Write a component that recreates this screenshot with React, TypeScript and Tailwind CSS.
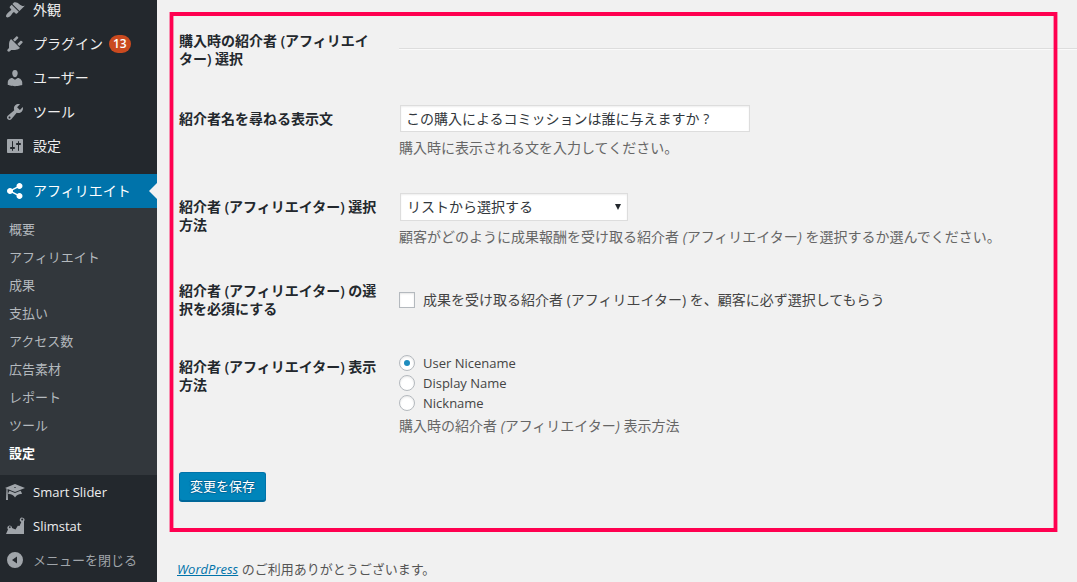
import type { ReactNode } from 'react';

const ICONS: Record<string, string> = {
  appearance:
    'M14.48 11.06L7.41 3.99l1.5-1.5c.5-.56 2.3-.47 3.51.32 1.21.8 1.43 1.28 2.91 2.1 1.18.64 2.45 1.26 4.45.85zm-.71.71L6.7 4.7 4.93 6.47c-.39.39-.39 1.02 0 1.41l1.06 1.06c.39.39.39 1.03 0 1.42-.6.6-1.43 1.11-2.21 1.69-.35.26-.7.53-1.01.84C1.43 14.23.4 16.08 1.4 17.07c.99 1 2.84-.03 4.18-1.36.31-.31.58-.66.85-1.02.57-.78 1.08-1.61 1.69-2.21.39-.39 1.02-.39 1.41 0l1.06 1.06c.39.39 1.02.39 1.41 0z',
  plugins:
    'M13.11 4.36L9.87 7.6 8 5.73l3.24-3.24c.35-.34 1.05-.2 1.56.32.52.51.66 1.21.31 1.55zm-8 1.77l.91-1.12 9.01 9.01-1.19.84c-.71.71-2.63 1.16-3.82 1.16H6.14L4.9 17.26c-.59.59-1.54.59-2.12 0-.59-.58-.59-1.53 0-2.12l1.24-1.24v-3.88c0-1.13.4-3.19 1.09-3.89zm7.26 3.97l3.24-3.24c.34-.35 1.04-.21 1.55.31.52.51.66 1.21.31 1.55l-3.24 3.25z',
  users:
    'M10 9.25c-2.27 0-2.73-3.44-2.73-3.44C7 4.02 7.82 2 9.97 2c2.16 0 2.98 2.02 2.71 3.81 0 0-.41 3.44-2.68 3.44zm0 2.57L12.72 10c2.39 0 4.52 2.33 4.52 4.53v2.49s-3.65 1.13-7.24 1.13c-3.65 0-7.24-1.13-7.24-1.13v-2.49c0-2.25 1.94-4.48 4.47-4.48z',
  tools:
    'M16.68 9.77c-1.34 1.34-3.3 1.67-4.95.99l-5.41 6.52c-.99.99-2.59.99-3.58 0s-.99-2.59 0-3.57l6.52-5.42c-.68-1.65-.35-3.61.99-4.95 1.28-1.28 3.12-1.62 4.72-1.06l-2.89 2.89 2.82 2.82 2.86-2.87c.53 1.58.18 3.39-1.08 4.65zM3.81 16.21c.4.39 1.04.39 1.43 0 .4-.4.4-1.04 0-1.43-.39-.4-1.03-.4-1.43 0-.39.39-.39 1.03 0 1.43z',
  settings:
    'M18 16V4c0-.55-.45-1-1-1H3c-.55 0-1 .45-1 1v12c0 .55.45 1 1 1h14c.55 0 1-.45 1-1zM8 11h1c.55 0 1 .45 1 1s-.45 1-1 1H8v1.5c0 .28-.22.5-.5.5s-.5-.22-.5-.5V13H6c-.55 0-1-.45-1-1s.45-1 1-1h1V5.5c0-.28.22-.5.5-.5s.5.22.5.5V11zm5-2h-1c-.55 0-1-.45-1-1s.45-1 1-1h1V5.5c0-.28.22-.5.5-.5s.5.22.5.5V7h1c.55 0 1 .45 1 1s-.45 1-1 1h-1v5.5c0 .28-.22.5-.5.5s-.5-.22-.5-.5V9z',
  share:
    'M14.5 12c1.66 0 3 1.34 3 3s-1.34 3-3 3-3-1.34-3-3c0-.24.03-.46.09-.69l-4.38-2.3c-.55.61-1.33.99-2.21.99-1.66 0-3-1.34-3-3s1.34-3 3-3c.88 0 1.66.39 2.21.99l4.38-2.3c-.06-.23-.09-.45-.09-.69 0-1.66 1.34-3 3-3s3 1.34 3 3-1.34 3-3 3c-.88 0-1.66-.39-2.21-.99l-4.38 2.3c.06.23.09.45.09.69s-.03.46-.09.69l4.38 2.3c.55-.61 1.33-.99 2.21-.99z',
  slider:
    'M10 10L2.54 7.02 3 18H1l.48-11.41L0 6l10-4 10 4zm0-5c-.55 0-1 .22-1 .5s.45.5 1 .5 1-.22 1-.5-.45-.5-1-.5zm0 6l5.57-2.23c.71.94 1.2 2.07 1.36 3.3-.3-.04-.61-.07-.93-.07-2.55 0-4.78 1.37-6 3.41C8.78 13.37 6.55 12 4 12c-.32 0-.63.03-.93.07.16-1.23.65-2.36 1.36-3.3z',
  stats:
    'M1 18l2-4.600A2.300 2.300 0 1 1 7 11.900l3.500 1.600L12.800 9.700 14.500 10 16.300 6A2.300 2.300 0 1 1 19 5.200V18zM4.800 10.200a.9.9 0 1 0 .01 0zM17.200 2.600a.9.9 0 1 0 .01 0z',
  collapse: 'M10 2a8 8 0 1 1 0 16 8 8 0 0 1 0-16zm2 4.500L7 10l5 3.500z',
};

function Icon({ name }: { name: string }) {
  return (
    <svg viewBox="0 0 20 20" className="size-5 shrink-0" fill="currentColor" fillRule="evenodd" aria-hidden="true">
      <path d={ICONS[name]} />
    </svg>
  );
}

function MenuItem({ icon, children }: { icon: string; children: ReactNode }) {
  return (
    <li>
      <a href="#" className="flex h-[34px] items-center gap-2 pl-[5px] text-[#eee]">
        <span className="text-[#a0a5aa]">
          <Icon name={icon} />
        </span>
        {children}
      </a>
    </li>
  );
}

const SUBMENU = ['概要', 'アフィリエイト', '成果', '支払い', 'アクセス数', '広告素材', 'レポート', 'ツール', '設定'];

function Sidebar() {
  return (
    <nav className="w-[157px] shrink-0 overflow-hidden bg-[#23282d] text-sm whitespace-nowrap">
      <ul className="-mt-[7px]">
        <MenuItem icon="appearance">外観</MenuItem>
        <MenuItem icon="plugins">
          プラグイン
          <span className="-ml-0.5 flex h-[18px] items-center rounded-full bg-[#ca4a1f] px-1 text-xs font-semibold text-white">
            13
          </span>
        </MenuItem>
        <MenuItem icon="users">ユーザー</MenuItem>
        <MenuItem icon="tools">ツール</MenuItem>
        <MenuItem icon="settings">設定</MenuItem>
        <li className="mt-[11px]">
          <a href="#" className="relative flex h-[34px] items-center gap-2 bg-[#0073aa] pl-[5px] text-white">
            <Icon name="share" />
            アフィリエイト
            <span className="absolute top-[9px] right-0 border-y-8 border-r-8 border-y-transparent border-r-[#f1f1f1]" />
          </a>
          <ul className="bg-[#32373c] pt-[7px] pb-2 text-[13px]">
            {SUBMENU.map((label, i) => (
              <li key={label}>
                <a
                  href="#"
                  className={
                    i === SUBMENU.length - 1
                      ? 'flex h-7 items-center pl-[9px] font-semibold text-white'
                      : 'flex h-7 items-center pl-[9px] text-[#b4b9be]'
                  }
                >
                  {label}
                </a>
              </li>
            ))}
          </ul>
        </li>
        <MenuItem icon="slider">
          <span className="text-[13px]">Smart Slider</span>
        </MenuItem>
        <MenuItem icon="stats">
          <span className="text-[13px]">Slimstat</span>
        </MenuItem>
        <li>
          <button type="button" className="flex h-[34px] w-full items-center gap-2 pl-[5px] text-[13px] text-[#a0a5aa]">
            <Icon name="collapse" />
            メニューを閉じる
          </button>
        </li>
      </ul>
    </nav>
  );
}

function Row({ heading, children }: { heading: ReactNode; children: ReactNode }) {
  return (
    <div className="grid grid-cols-[200px_1fr] gap-x-5">
      <div className="py-5 leading-[18px] font-semibold text-[#23282d]">{heading}</div>
      <div className="min-w-0 pt-[15px]">{children}</div>
    </div>
  );
}

function Description({ children }: { children: ReactNode }) {
  return <p className="mt-1.5 leading-5 text-[#666]">{children}</p>;
}

function SettingsForm() {
  return (
    <form className="pt-3 pl-[22px] text-sm text-[#444]" onSubmit={(e) => e.preventDefault()}>
      <div className="pb-0.5">
        <Row heading="購入時の紹介者 (アフィリエイター) 選択">
          <hr className="mt-[21px] border-t border-b border-t-[#ddd] border-b-[#fafafa]" />
        </Row>
      </div>
      <div className="pb-5">
        <Row heading={<label htmlFor="question">紹介者名を尋ねる表示文</label>}>
          <input
            id="question"
            type="text"
            defaultValue="この購入によるコミッションは誰に与えますか ?"
            className="ml-px block h-[27px] w-[350px] max-w-full border border-[#ddd] bg-white px-[5px] pb-0.5 text-[#32373c] shadow-[inset_0_1px_2px_rgba(0,0,0,0.07)]"
          />
          <Description>購入時に表示される文を入力してください。</Description>
        </Row>
      </div>
      <div className="pb-2">
        <Row heading={<label htmlFor="method">紹介者 (アフィリエイター) 選択方法</label>}>
          <div className="relative ml-px w-[228px]">
            <select
              id="method"
              className="block h-7 w-full appearance-none border border-[#ddd] bg-white pr-5 pl-1.5 text-[#32373c] shadow-[inset_0_1px_2px_rgba(0,0,0,0.07)]"
            >
              <option>リストから選択する</option>
            </select>
            <svg
              viewBox="0 0 6 6"
              className="pointer-events-none absolute top-[11px] right-[7px] size-1.5"
              fill="#23282d"
              aria-hidden="true"
            >
              <path d="M0 0h6L3 6z" />
            </svg>
          </div>
          <Description>
            顧客がどのように成果報酬を受け取る紹介者 <em>(</em>アフィリエイター<em>)</em> を選択するか選んでください。
          </Description>
        </Row>
      </div>
      <Row heading={<label htmlFor="required">紹介者 (アフィリエイター) の選択を必須にする</label>}>
        <label className="mt-[13px] flex items-center gap-2 leading-5">
          <input
            id="required"
            type="checkbox"
            className="size-4 shrink-0 appearance-none border border-[#b4b9be] bg-white shadow-[inset_0_1px_2px_rgba(0,0,0,0.1)]"
          />
          成果を受け取る紹介者 (アフィリエイター) を、顧客に必ず選択してもらう
        </label>
      </Row>
      <Row heading={<span id="display-label">紹介者 (アフィリエイター) 表示方法</span>}>
        <div role="radiogroup" aria-labelledby="display-label">
          {['User Nicename', 'Display Name', 'Nickname'].map((label, i) => (
            <label key={label} className="flex items-center gap-2 text-[13px] leading-5">
              <input
                type="radio"
                name="display"
                defaultChecked={i === 0}
                className="grid size-4 shrink-0 appearance-none place-items-center rounded-full border border-[#b4b9be] bg-white shadow-[inset_0_1px_2px_rgba(0,0,0,0.1)] before:size-1.5 before:rounded-full checked:before:bg-[#1e8cbe]"
              />
              {label}
            </label>
          ))}
        </div>
        <p className="mt-[3px] leading-5 text-[#666]">
          購入時の紹介者 <em>(</em>アフィリエイター<em>)</em> 表示方法
        </p>
      </Row>
      <button
        type="submit"
        className="mt-9 flex h-[29px] items-center rounded-[3px] border border-[#0073aa] border-b-[#006799] bg-[#0085ba] px-2.5 text-[13px] text-white shadow-[0_1px_0_#006799] [text-shadow:0_-1px_1px_#006799,1px_0_1px_#006799,0_1px_1px_#006799,-1px_0_1px_#006799]"
      >
        変更を保存
      </button>
    </form>
  );
}

export default function App() {
  return (
    <div className="flex min-h-screen bg-[#f1f1f1] font-['Open_Sans','Noto_Sans_CJK_JP',sans-serif]">
      <Sidebar />
      <main className="relative min-w-0 flex-1">
        <SettingsForm />
        <div className="pointer-events-none absolute top-3 right-5 left-[13px] h-[520px] border-x-[3px] border-y-4 border-[#ff0050] shadow-[1px_0_0_rgba(255,0,80,0.4),-1px_0_0_rgba(255,0,80,0.4),inset_1px_0_0_rgba(255,0,80,0.4),inset_-1px_0_0_rgba(255,0,80,0.4)]" />
        <footer className="mt-[58px] pl-5 text-[13px] leading-5 text-[#555]">
          <a href="#" className="text-[#0073aa] italic underline">
            WordPress
          </a>{' '}
          のご利用ありがとうございます。
        </footer>
      </main>
    </div>
  );
}
